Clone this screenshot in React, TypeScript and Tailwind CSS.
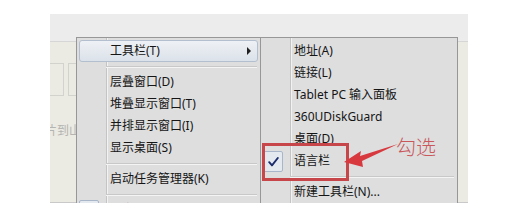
import React from 'react';

type Row = { label: string; sep?: boolean; hot?: boolean; sub?: boolean; checked?: boolean };

const mainRows: Row[] = [
  { label: '工具栏(T)', hot: true, sub: true },
  { label: '', sep: true },
  { label: '层叠窗口(D)' },
  { label: '堆叠显示窗口(T)' },
  { label: '并排显示窗口(I)' },
  { label: '显示桌面(S)' },
  { label: '', sep: true },
  { label: '启动任务管理器(K)' },
  { label: '', sep: true },
  { label: '锁定任务栏(L)', checked: true },
];

const subRows: Row[] = [
  { label: '地址(A)' },
  { label: '链接(L)' },
  { label: 'Tablet PC 输入面板' },
  { label: '360UDiskGuard' },
  { label: '桌面(D)' },
  { label: '语言栏', checked: true },
  { label: '', sep: true },
  { label: '新建工具栏(N)...' },
];

const CheckBox = () => (
  <div className="absolute left-0 top-[1px] flex h-[21px] w-[20px] items-center justify-center rounded-[2px] border border-[#a9b6c9] bg-[#e4e9f0]">
    <svg width="11" height="10" viewBox="0 0 11 10">
      <path d="M1.2 5.2 L4 8.4 L9.8 1" fill="none" stroke="#1b2b6b" strokeWidth="1.9" strokeLinecap="round" strokeLinejoin="round" />
    </svg>
  </div>
);

const Menu: React.FC<{ rows: Row[]; className: string }> = ({ rows, className }) => (
  <div className={`absolute border border-[#979797] bg-[#dedede] p-[2px] ${className}`}>
    <div className="absolute left-[29px] top-0 bottom-0 w-[1px] bg-[#c4c4c4]" />
    <div className="absolute left-[30px] top-0 bottom-0 w-[1px] bg-[#f2f2f2]" />
    {rows.map((row, i) =>
      row.sep ? (
        <div key={i} className="relative flex h-[9px] flex-col justify-center pl-[27px] pr-[1px]">
          <div className="h-[1px] bg-[#c8c8c8]" />
          <div className="h-[1px] bg-[#f4f4f4]" />
        </div>
      ) : (
        <div
          key={i}
          className={`relative flex h-[22px] items-center pl-[31px] pr-[6px] ${
            row.hot ? 'rounded-[3px] border border-[#b3bfce] bg-linear-to-b from-[#eef1f5] to-[#dce2ea]' : ''
          }`}
        >
          {row.checked && <CheckBox />}
          <span className={`flex-1 whitespace-nowrap text-[12px] leading-none text-[#151515] ${row.hot ? '-ml-[1px]' : ''}`}>{row.label}</span>
          {row.sub && (
            <svg width="5" height="8" viewBox="0 0 5 8" className="mr-[-1px]">
              <path d="M0 0 L4 4 L0 8 Z" fill="#202020" />
            </svg>
          )}
        </div>
      )
    )}
  </div>
);

export default function App() {
  return (
    <div className="h-[216px] w-[513px] bg-white pl-[50px] pt-[14px] font-['Noto_Sans','Noto_Sans_CJK_SC',sans-serif]">
      <div className="relative flex h-[189px] w-[418px] flex-col overflow-hidden bg-[#ebebeb]">
        <div className="h-[28px] border-b border-[#d6d6d6] bg-[#ececec]" />
        <div className="flex flex-1 border-b border-[#c9c9c9] bg-[#ebeae3]">
          <div className="relative w-[26px] overflow-hidden pt-[21px]">
            <div className="flex h-[33px] gap-[4px]">
              <div className="w-[14px] border-y border-r border-[#d3d3ce]" />
              <div className="flex-1 border-y border-l border-[#d3d3ce]" />
            </div>
            <div className="-ml-[5px] mt-[29px] whitespace-nowrap text-[12px] leading-none text-[#b4b4b0]">片到山</div>
          </div>
          <div className="flex-1" />
        </div>

        <Menu rows={mainRows} className="left-[26px] top-[23px] w-[185px]" />
        <Menu rows={subRows} className="left-[210px] top-[23px] w-[198px]" />

        <div className="absolute left-[212px] top-[129px] h-[38px] w-[87px] border-[3px] border-[#c7464a]" />

        <svg className="absolute left-0 top-0" width="418" height="189" viewBox="0 0 418 189">
          <polygon points="294,148 311,137 310,142 348,130 312,147 313,153" fill="#d8393f" />
        </svg>

        <div className="absolute left-[346px] top-[121px] font-['Noto_Sans_CJK_SC',sans-serif] text-[20px] font-light leading-[24px] text-[#c9575c]">
          勾选
        </div>
      </div>
    </div>
  );
}
